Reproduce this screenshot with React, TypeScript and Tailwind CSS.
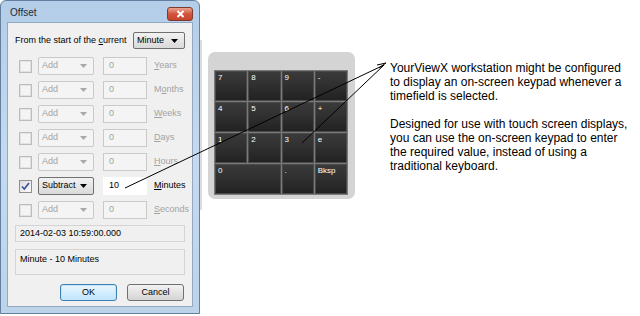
import type { FC, ReactNode } from "react"

const ui = { fontFamily: '"Liberation Sans", Arial, sans-serif' }

const Arrow: FC<{ off?: boolean }> = ({ off }) => (
  <svg width="7" height="4" viewBox="0 0 7 4">
    <path d="M0 0h7L3.5 4z" fill={off ? "#a8a8a8" : "#000"} />
  </svg>
)

const Check: FC<{ on?: boolean; off?: boolean }> = ({ on, off }) => (
  <div
    className={`w-[13px] h-[13px] shrink-0 flex items-center justify-center border ${
      off
        ? "border-[#bcbcbc] bg-[#f4f4f4] shadow-[inset_0_0_0_1px_#e2e2e2]"
        : "border-[#8e8f8f] bg-gradient-to-br from-[#dcdcdc] to-[#fbfbfb]"
    }`}
  >
    {on && (
      <svg width="9" height="9" viewBox="0 0 9 9">
        <path d="M1 4.5l2.3 2.6L8 1" fill="none" stroke="#3a4f99" strokeWidth="1.6" />
      </svg>
    )}
  </div>
)

const Mn: FC<{ label: string; at: number }> = ({ label, at }) => (
  <>
    {label.slice(0, at)}
    <span className="underline underline-offset-1">{label[at]}</span>
    {label.slice(at + 1)}
  </>
)

type Row = { unit: string; at: number; on?: boolean }

const rows: Row[] = [
  { unit: "Years", at: 0 },
  { unit: "Months", at: 1 },
  { unit: "Weeks", at: 0 },
  { unit: "Days", at: 0 },
  { unit: "Hours", at: 0 },
  { unit: "Minutes", at: 0, on: true },
  { unit: "Seconds", at: 0 },
]

const OffsetRow: FC<Row> = ({ unit, at, on }) => (
  <div className="flex items-center h-[18px] text-[9px]">
    <div className="ml-[4px] shrink-0">
      <Check on={on} off={!on} />
    </div>
    <div
      className={`ml-[6px] w-[56px] h-[18px] shrink-0 flex items-center justify-between pl-[3px] pr-[6px] rounded-[2px] border ${
        on
          ? "border-[#707070] bg-gradient-to-b from-[#f2f2f2] to-[#d9d9d9] text-black"
          : "border-[#c9c9c9] bg-[#f4f4f4] text-[#a3a3a3]"
      }`}
    >
      <span>{on ? "Subtract" : "Add"}</span>
      <Arrow off={!on} />
    </div>
    <div
      className={`ml-[9px] w-[44px] h-[18px] shrink-0 flex items-center pl-[5px] border ${
        on ? "border-white bg-white text-black" : "border-[#c9c9c9] bg-[#f4f4f4] text-[#a3a3a3]"
      }`}
    >
      {on ? "10" : "0"}
    </div>
    <span className={`ml-[7px] shrink-0 whitespace-nowrap ${on ? "text-black" : "text-[#a3a3a3]"}`}>
      <Mn label={unit} at={at} />
    </span>
  </div>
)

const Btn: FC<{ children: ReactNode; def?: boolean }> = ({ children, def }) => (
  <div
    className={`w-[57px] h-[17px] flex items-center justify-center rounded-[3px] border text-[9px] text-black ${
      def
        ? "border-[#3c7fb1] bg-gradient-to-b from-[#eaf6fd] to-[#bee6fd] shadow-[inset_0_0_0_1px_#c3e8fb]"
        : "border-[#707070] bg-gradient-to-b from-[#f2f2f2] to-[#d5d5d5]"
    }`}
  >
    {children}
  </div>
)

const Dialog: FC = () => (
  <div className="w-[200px] h-[314px] shrink-0 flex flex-col rounded-t-[6px] border border-[#65809e] bg-gradient-to-b from-[#b4cde8] via-[#c5daf0] to-[#bcd3ea]">
    <div className="h-[21px] flex items-center justify-between pl-[9px] pr-[6px] pt-[2px]">
      <span className="text-[10px] text-[#1e2a3a]">Offset</span>
      <div className="w-[26px] h-[14px] mt-[2px] flex items-center justify-center rounded-[3px] border border-[#7e3a30] bg-gradient-to-b from-[#e8a493] via-[#d2533c] to-[#c7452c]">
        <svg width="9" height="8" viewBox="0 0 9 8">
          <path d="M1.5 1l6 6M7.5 1l-6 6" stroke="#fff" strokeWidth="2" />
        </svg>
      </div>
    </div>
    <div className="flex-1 mx-[6px] mb-[6px] border border-[#93a9c2] bg-[#f0f0f0] flex flex-col px-[7px] pt-[9px]">
      <div className="flex items-center justify-between h-[17px] text-[9px] text-black">
        <span className="whitespace-nowrap">
          From the start of the <Mn label="current" at={0} />
        </span>
        <div className="w-[52px] h-[17px] shrink-0 flex items-center justify-between pl-[3px] pr-[6px] rounded-[2px] border border-[#707070] bg-gradient-to-b from-[#f2f2f2] to-[#d9d9d9]">
          <span>Minute</span>
          <Arrow />
        </div>
      </div>
      <div className="mt-[8px] flex flex-col gap-[6px]">
        {rows.map((r) => (
          <OffsetRow key={r.unit} {...r} />
        ))}
      </div>
      <div className="mt-[6px] h-[17px] flex items-center pl-[4px] border border-[#d4d4d4] bg-[#f0f0f0] text-[9px] text-black">
        2014-02-03 10:59:00.000
      </div>
      <div className="mt-[7px] h-[26px] pt-[3px] pl-[4px] border border-[#d4d4d4] bg-[#f0f0f0] text-[9px] text-black">
        Minute - 10 Minutes
      </div>
      <div className="mt-[9px] flex justify-end gap-[10px] pr-[1px]">
        <Btn def>OK</Btn>
        <Btn>Cancel</Btn>
      </div>
    </div>
  </div>
)

const keys = [
  ["7", "8", "9", "-"],
  ["4", "5", "6", "+"],
  ["1", "2", "3", "e"],
]

const Key: FC<{ label: string; wide?: boolean }> = ({ label, wide }) => (
  <div
    className={`${wide ? "col-span-2" : ""} h-[30px] pl-[2px] pt-[1px] text-[8px] leading-[10px] text-white border border-[#4a4a4a] bg-gradient-to-b from-[#3a3a3a] via-[#2f2f2f] to-[#222]`}
  >
    {label}
  </div>
)

const Keypad: FC = () => (
  <div className="ml-[3px] mt-[52px] w-[147px] h-[147px] shrink-0 rounded-[7px] bg-[#d4d4d4] pt-[18px] pl-[6px] pr-[7px]">
    <div className="grid grid-cols-4 gap-[1px] bg-[#7a7a7a] p-px">
      {keys.flat().map((k) => (
        <Key key={k} label={k} />
      ))}
      <Key label="0" wide />
      <Key label="." />
      <Key label="Bksp" />
    </div>
  </div>
)

export default function App() {
  return (
    <div className="relative w-[640px] h-[316px] bg-white flex overflow-hidden" style={ui}>
      <Dialog />
      <div className="w-[5px] h-[170px] mt-[40px] border-l-[2px] border-[#dcdcdc] shrink-0" />
      <Keypad />
      <div className="ml-[35px] mt-[61px] text-[12px] leading-[14px] text-black whitespace-nowrap">
        <p>
          YourViewX workstation might be configured
          <br />
          to display an on-screen keypad whenever a
          <br />
          timefield is selected.
        </p>
        <p className="mt-[14px]">
          Designed for use with touch screen displays,
          <br />
          you can use the on-screen keypad to enter
          <br />
          the required value, instead of using a
          <br />
          traditional keyboard.
        </p>
      </div>
      <svg className="absolute inset-0 pointer-events-none" width="640" height="316">
        <line x1="125" y1="188" x2="384" y2="65" stroke="#000" strokeWidth="1" />
        <line x1="302" y1="143" x2="384" y2="65" stroke="#000" strokeWidth="1" />
        <path d="M379 68L386 63L377 65" fill="none" stroke="#000" strokeWidth="1" />
      </svg>
    </div>
  )
}
